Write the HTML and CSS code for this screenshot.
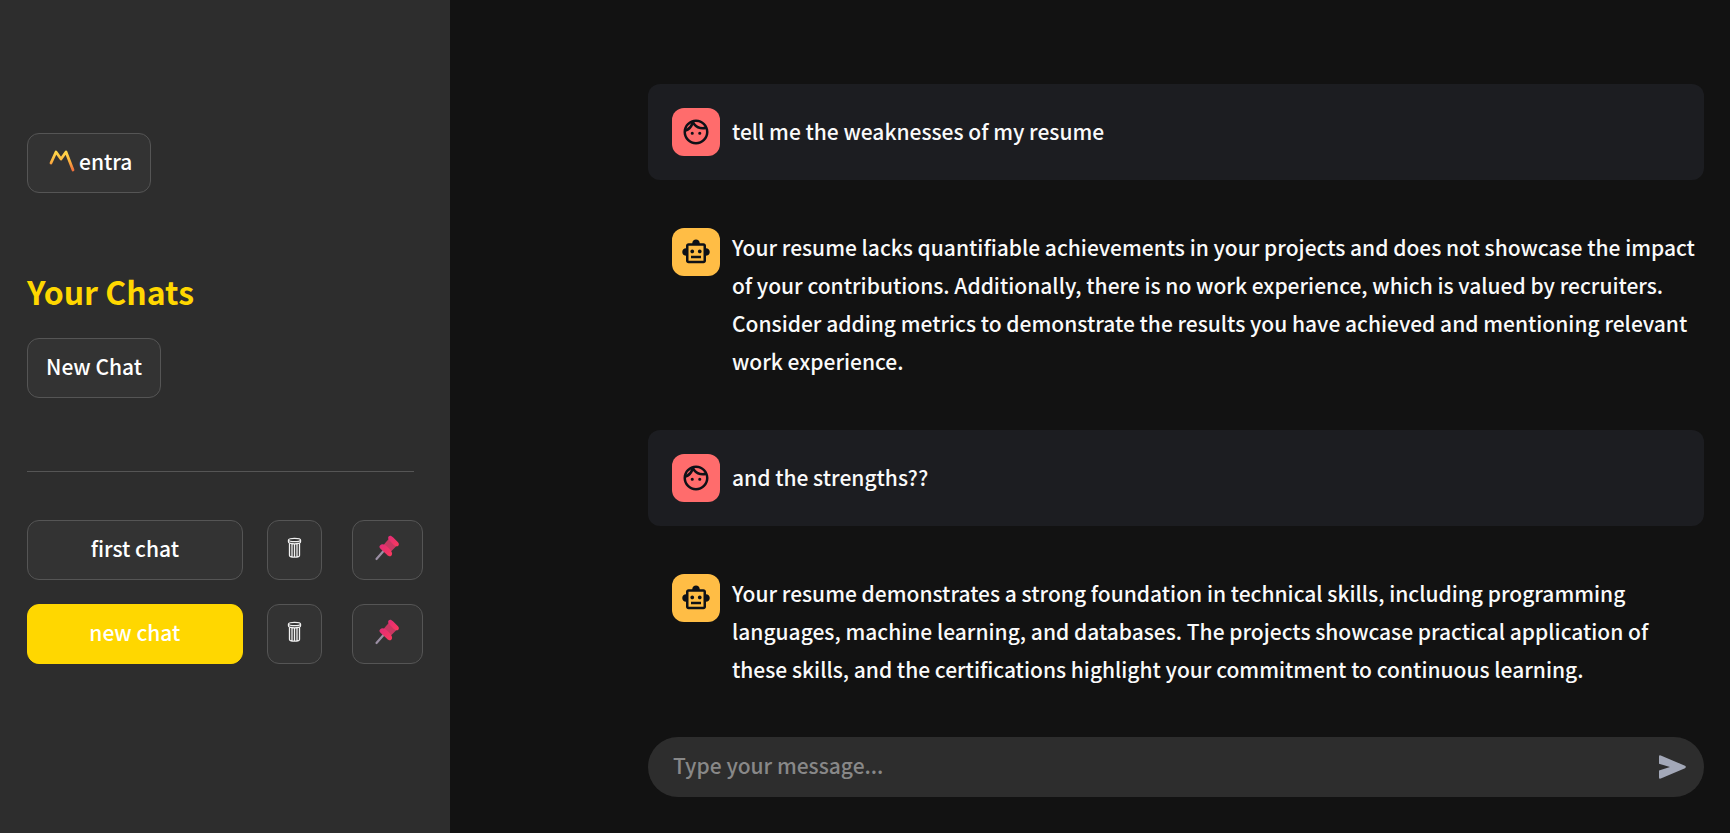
FILE: index.html
```html
<!DOCTYPE html>
<html lang="en">
<head>
<meta charset="utf-8">
<meta name="viewport" content="width=device-width, initial-scale=1">
<title>Mentra</title>
<link rel="stylesheet" href="styles.css">
</head>
<body>
<svg class="defs" aria-hidden="true">
  <defs>
    <linearGradient id="mark" x1="0" y1="0" x2="0" y2="1"><stop offset="0" stop-color="#ffd84a"/><stop offset=".5" stop-color="#fcb43e"/><stop offset="1" stop-color="#f0703c"/></linearGradient>
    <linearGradient id="pink" x1="0" y1="0" x2="1" y2="1"><stop offset="0" stop-color="#e02c78"/><stop offset="1" stop-color="#fc3a5c"/></linearGradient>
    <symbol id="face" viewBox="0 0 24 24"><path d="M10.25 13a1.25 1.25 0 1 1-2.5 0 1.25 1.25 0 0 1 2.5 0zM15 11.75a1.25 1.25 0 1 0 0 2.5 1.25 1.25 0 0 0 0-2.5zm7 .25c0 5.52-4.48 10-10 10S2 17.52 2 12 6.48 2 12 2s10 4.48 10 10zM10.66 4.12C12.06 6.44 14.6 8 17.5 8c.46 0 .91-.05 1.34-.12C17.44 5.56 14.9 4 12 4c-.46 0-.91.05-1.34.12zM4.42 9.47a8.046 8.046 0 0 0 3.66-4.44 8.046 8.046 0 0 0-3.66 4.44zM20 12c0-.78-.12-1.53-.33-2.24-.7.15-1.42.24-2.17.24a10 10 0 0 1-7.76-3.69A10.016 10.016 0 0 1 4 11.86c.01.04 0 .09 0 .14 0 4.41 3.59 8 8 8s8-3.59 8-8z"/></symbol>
    <symbol id="robot" viewBox="0 0 24 24"><path d="M20 9V7c0-1.1-.9-2-2-2h-3c0-1.66-1.34-3-3-3S9 3.34 9 5H6c-1.1 0-2 .9-2 2v2c-1.66 0-3 1.34-3 3s1.34 3 3 3v4c0 1.1.9 2 2 2h12c1.1 0 2-.9 2-2v-4c1.66 0 3-1.34 3-3s-1.34-3-3-3zm-2 10H6V7h12v12zM9 13c-.83 0-1.5-.67-1.5-1.5S8.17 10 9 10s1.5.67 1.5 1.5S9.83 13 9 13zm7.500-1.500c0 .83-.67 1.500-1.500 1.500s-1.500-.67-1.500-1.500.67-1.500 1.500-1.500 1.500.67 1.500 1.500zM8 15h8v2H8v-2z"/></symbol>
    <symbol id="trash" viewBox="0 0 17 28"><g fill="none" stroke="#f0f0f0" stroke-width="1.3"><ellipse cx="8.500" cy="6" rx="6" ry="1.700"/><path d="M2.500 6v2c0 1 2.600 1.800 6 1.800s6-.8 6-1.800V6M3.500 9v12.500c0 1 2 1.700 5 1.700s5-.7 5-1.700V9M6 10v12.500M8.500 10v13M11 10v12.500"/></g></symbol>
    <symbol id="pin" viewBox="0 0 28 28"><path d="M3 25 10 17" fill="none" stroke="#9a8ea3" stroke-width="2.200" stroke-linecap="round"/><path d="M10 11 16 4l8 7-7 7z" fill="#c73862"/><path d="M6.500 11.500c2-2 4.500-1.500 7.500 1.500s6 6 4 8.500c-1.500 1.500-3 .8-4.500-.7l-6-5.500c-1.500-1.500-2.200-2.600-1-3.800z" fill="url(#pink)"/><path d="M15.300 2.300c1.300-1.300 2.700-.4 4.200 1l4.500 4.500c1.400 1.400 1.900 2.800.8 3.900s-2.800.7-4.400-.8l-4.200-4.200c-1.500-1.500-2.200-3.100-.9-4.400z" fill="url(#pink)"/></symbol>
  </defs>
</svg>
<div class="app">
  <aside class="sidebar">
    <button class="btn brand" type="button" aria-label="Mentra">
      <svg class="mark" viewBox="0 0 26 26" aria-hidden="true"><path d="M2 15 7 4l5 7 5-7 7 18" fill="none" stroke="url(#mark)" stroke-width="2.800" stroke-linecap="round" stroke-linejoin="round"/></svg>
      <span>entra</span>
    </button>
    <h2 class="title">Your Chats</h2>
    <button class="btn" type="button">New Chat</button>
    <hr class="rule">
    <div class="chats">
      <button class="btn" type="button">first chat</button>
      <button class="btn" type="button" aria-label="Delete first chat"><svg class="trash"><use href="#trash"/></svg></button>
      <button class="btn" type="button" aria-label="Pin first chat"><svg class="pin"><use href="#pin"/></svg></button>
      <button class="btn active" type="button">new chat</button>
      <button class="btn" type="button" aria-label="Delete new chat"><svg class="trash"><use href="#trash"/></svg></button>
      <button class="btn" type="button" aria-label="Pin new chat"><svg class="pin"><use href="#pin"/></svg></button>
    </div>
  </aside>
  <main class="main">
    <div class="thread">
      <article class="message user">
        <span class="avatar"><svg class="icon"><use href="#face"/></svg></span>
        <p class="text">tell me the weaknesses of my resume</p>
      </article>
      <article class="message bot">
        <span class="avatar"><svg class="icon"><use href="#robot"/></svg></span>
        <p class="text">Your resume lacks quantifiable achievements in your projects and does not showcase the impact of your contributions. Additionally, there is no work experience, which is valued by recruiters. Consider adding metrics to demonstrate the results you have achieved and mentioning relevant work experience.</p>
      </article>
      <article class="message user">
        <span class="avatar"><svg class="icon"><use href="#face"/></svg></span>
        <p class="text">and the strengths??</p>
      </article>
      <article class="message bot">
        <span class="avatar"><svg class="icon"><use href="#robot"/></svg></span>
        <p class="text">Your resume demonstrates a strong foundation in technical skills, including programming languages, machine learning, and databases. The projects showcase practical application of these skills, and the certifications highlight your commitment to continuous learning.</p>
      </article>
    </div>
    <form class="composer">
      <input class="field" type="text" placeholder="Type your message..." aria-label="Type your message">
      <button class="send" type="button" aria-label="Send"><svg class="arrow" viewBox="0 0 28 24" aria-hidden="true"><path d="M1 1.500Q1-.2 2.800.4L27 10.800q1.700 1.200 0 2.400L2.800 23.600Q1 24.200 1 22.500V15.500L12 12 1 8.700z"/></svg></button>
    </form>
  </main>
</div>
</body>
</html>
```

FILE: styles.css
```css
* {
  box-sizing: border-box;
}

body {
  margin: 0;
  background: #121212;
  color: #fafafa;
  font: 500 21px/38px "Noto Sans CJK SC", "Noto Sans", sans-serif;
}

.defs {
  position: absolute;
  width: 0;
  height: 0;
}

.app {
  display: flex;
  min-height: 100vh;
}

.sidebar {
  flex: 0 0 450px;
  display: flex;
  flex-direction: column;
  align-items: flex-start;
  padding: 133px 36px 36px 27px;
  background: #2d2d2d;
}

.btn {
  display: flex;
  align-items: center;
  justify-content: center;
  height: 60px;
  padding: 0 18px 4px;
  border: 1px solid #555;
  border-radius: 12px;
  background: #333;
  color: #fff;
  font: inherit;
  white-space: nowrap;
}

.btn.active {
  border-color: #ffd700;
  background: #ffd700;
}

.brand {
  gap: 4px;
}

.mark {
  width: 26px;
  height: 26px;
  margin-left: 3px;
}

.title {
  margin: 77px 0 25px;
  color: #ffd700;
  font-size: 32px;
  font-weight: 600;
  line-height: 43px;
}

.rule {
  width: 387px;
  margin: 73px 0 48px;
  border: 0;
  border-top: 1px solid #555;
}

.chats {
  display: grid;
  grid-template-columns: minmax(0, 7fr) minmax(0, 2fr) minmax(0, 2fr);
  justify-items: start;
  gap: 24px;
  width: 387px;
}

.chats .btn:nth-child(3n + 1) {
  width: 100%;
}

.trash {
  flex: none;
  width: 17px;
  height: 28px;
}

.pin {
  flex: none;
  width: 33px;
  height: 28px;
}

.main {
  flex: 1;
  display: flex;
  flex-direction: column;
  justify-content: space-between;
  min-width: 0;
  padding: 84px 26px 36px 198px;
}

.thread {
  display: grid;
  gap: 24px;
}

.message {
  display: flex;
  gap: 12px;
  padding: 24px 0 24px 24px;
  border-radius: 12px;
}

.user {
  align-items: center;
  background: #1c1d21;
}

.avatar {
  flex: none;
  display: grid;
  place-items: center;
  width: 48px;
  height: 48px;
  border-radius: 12px;
  color: #0e1117;
}

.user .avatar {
  background: #ff6c6c;
}

.bot .avatar {
  background: #ffbd45;
}

.icon {
  width: 30px;
  height: 30px;
  fill: currentColor;
}

.text {
  margin: 0 0 2px;
}

.composer {
  display: flex;
  align-items: center;
  height: 60px;
  padding: 0 18px 0 25px;
  border-radius: 30px;
  background: #2d2d2d;
}

.field {
  flex: 1;
  min-width: 0;
  padding: 0 0 4px;
  border: 0;
  outline: 0;
  background: none;
  color: #fff;
  font: inherit;
}

.field::placeholder {
  color: #888;
  opacity: 1;
}

.send {
  display: flex;
  padding: 0;
  border: 0;
  background: none;
}

.arrow {
  width: 28px;
  height: 24px;
  fill: #a3a8b8;
}
```
